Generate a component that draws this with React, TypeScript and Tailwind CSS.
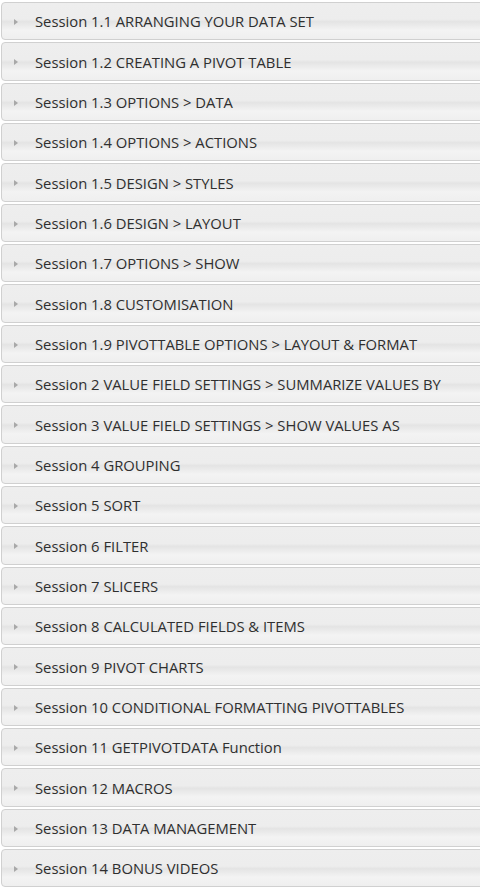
import React from 'react';

const sessions: string[] = [
    'Session 1.1 ARRANGING YOUR DATA SET',
    'Session 1.2 CREATING A PIVOT TABLE',
    'Session 1.3 OPTIONS > DATA',
    'Session 1.4 OPTIONS > ACTIONS',
    'Session 1.5 DESIGN > STYLES',
    'Session 1.6 DESIGN > LAYOUT',
    'Session 1.7 OPTIONS > SHOW',
    'Session 1.8 CUSTOMISATION',
    'Session 1.9 PIVOTTABLE OPTIONS > LAYOUT & FORMAT',
    'Session 2 VALUE FIELD SETTINGS > SUMMARIZE VALUES BY',
    'Session 3 VALUE FIELD SETTINGS > SHOW VALUES AS',
    'Session 4 GROUPING',
    'Session 5 SORT',
    'Session 6 FILTER',
    'Session 7 SLICERS',
    'Session 8 CALCULATED FIELDS & ITEMS',
    'Session 9 PIVOT CHARTS',
    'Session 10 CONDITIONAL FORMATTING PIVOTTABLES',
    'Session 11 GETPIVOTDATA Function',
    'Session 12 MACROS',
    'Session 13 DATA MANAGEMENT',
    'Session 14 BONUS VIDEOS',
];

const App: React.FC = () => {
    return (
        <div className="w-[480px] h-[889px] overflow-hidden bg-white pt-[2px] pl-[1px]" style={{ fontFamily: '"Open Sans", sans-serif' }}>
            {sessions.map((title, index) => (
                <div
                    key={index}
                    className="flex items-center h-[38.33px] mb-[2px] w-[490px] border border-[#d0d0d0] rounded-[4px] bg-[linear-gradient(to_bottom,#eeeeee_0%,#ededed_45%,#e4e4e4_52%,#f3f3f3_75%,#efefef_100%)] cursor-pointer"
                >
                    <svg className="ml-[12px] mt-[2px] shrink-0" width="4" height="6" viewBox="0 0 4 6">
                        <path d="M0 0 L4 3 L0 6 Z" fill="#a8a8a8" />
                    </svg>
                    <span className="ml-[17px] mt-[1px] text-[14.8px] text-[#2f2f2f] leading-none whitespace-nowrap">{title}</span>
                </div>
            ))}
        </div>
    );
};

export default App;
